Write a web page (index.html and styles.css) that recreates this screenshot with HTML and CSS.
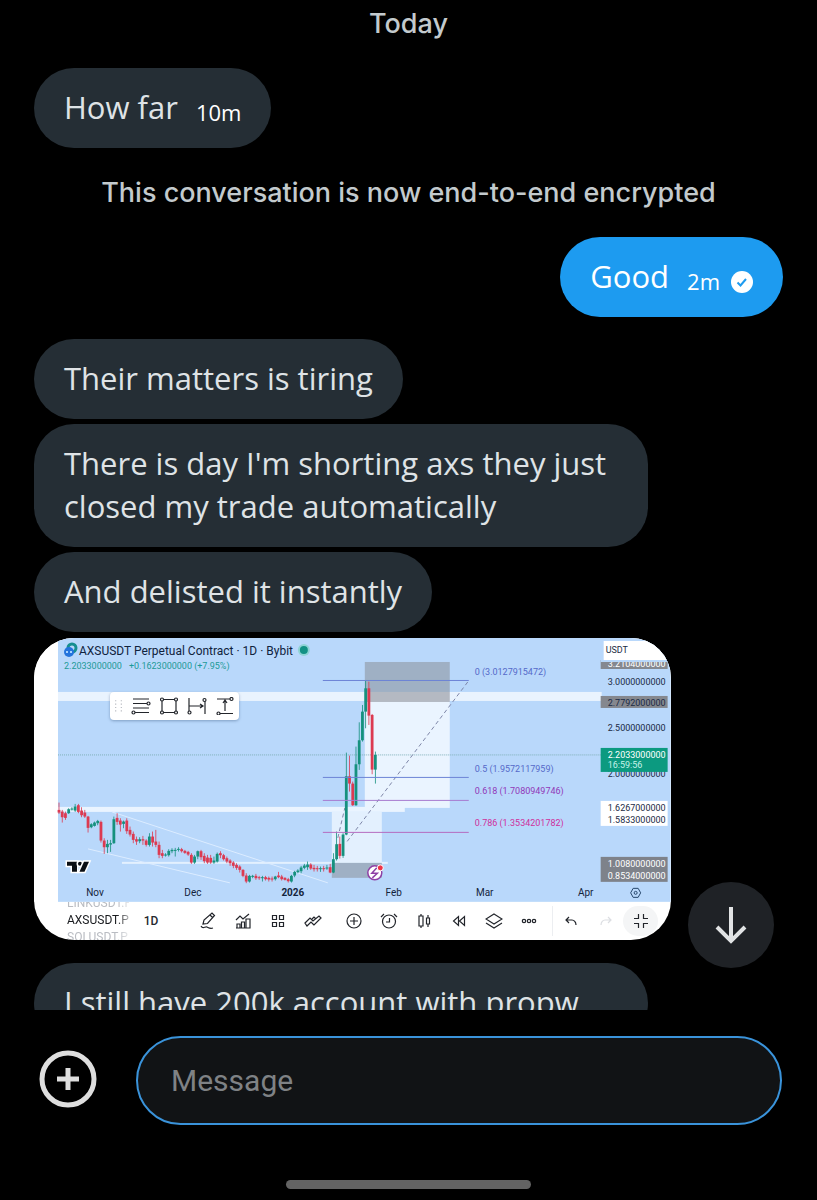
FILE: index.html
```html
<!DOCTYPE html>
<html lang="en">

<head>
    <meta charset="UTF-8">
    <meta name="viewport" content="width=device-width, initial-scale=1.0">
    <title>Messages</title>
    <link rel="stylesheet" href="styles.css">
</head>

<body>
    <main class="chat">
        <div class="messages">
            <p class="notice">Today</p>
            <div class="bubble">
                <span>How far</span>
                <time class="time">10m</time>
            </div>
            <p class="notice encrypted">This conversation is now end-to-end encrypted</p>
            <div class="bubble sent">
                <span>Good</span>
                <time class="time">2m</time>
                <svg class="check" viewBox="0 0 22 22" role="img" aria-label="Read">
                    <circle cx="11" cy="11" r="11" fill="#fff"/>
                    <path d="M6.500 11.500l3 3L15 8" fill="none" stroke="#1d9bf0" stroke-width="2"/>
                </svg>
            </div>
            <div class="group">
                <div class="bubble">Their matters is tiring</div>
                <div class="bubble">There is day I'm shorting axs they just closed my trade automatically</div>
                <div class="bubble">And delisted it instantly</div>

                <div class="photo">
                    <svg class="chart" viewBox="0 0 637 264">
                        <rect width="637" height="264" fill="#fff"/>
                        <rect x="24" width="613" height="264" fill="#b9d8fb"/>

                        <!-- zones -->
                        <rect x="24" y="54" width="544" height="9" fill="#e9f3fe"/>
                        <rect x="24" y="169" width="347" height="5" fill="#eaf4ff"/>
                        <rect x="88" y="224" width="266" height="2" fill="#e3f0fe"/>
                        <rect x="331" y="64" width="85" height="106" fill="#eaf4ff"/>
                        <rect x="331" y="24" width="85" height="30" fill="#9fb0c4"/>
                        <rect x="331" y="54" width="85" height="10" fill="#b4b9c2"/>
                        <rect x="298" y="174" width="50" height="51" fill="#e3f0fe"/>
                        <rect x="298" y="225" width="50" height="15" fill="#9fb0c4"/>
                        <path d="M78 174L294 245M54 211L196 245" stroke="#dcecff" fill="none"/>
                        <path d="M24 117H568" stroke="#7fb0b8" stroke-dasharray="1 1"/>
                        <path d="M434 44L313 204M304 200L311 170" stroke="#7d86a8" stroke-dasharray="4 3" fill="none"/>

                        <g id="candles"></g>

                        <!-- fib levels -->
                        <path d="M289 42.500H435M289 139.500H435" stroke="#6b83d6"/>
                        <path d="M289 162.500H435" stroke="#a779cf"/>
                        <path d="M289 194.500H435" stroke="#b56bc0"/>
                        <g class="label">
                            <text x="441" y="37" fill="#5569c9">0 (3.0127915472)</text>
                            <text x="441" y="134" fill="#5569c9">0.5 (1.9572117959)</text>
                            <text x="441" y="156" fill="#9137b8">0.618 (1.7080949746)</text>
                            <text x="441" y="188" fill="#cf2f9b">0.786 (1.3534201782)</text>
                        </g>

                        <!-- header -->
                        <circle cx="38" cy="10" r="4" fill="none" stroke="#168f91" stroke-width="3"/>
                        <circle cx="35" cy="14" r="5" fill="#2474dc"/>
                        <path d="M32 14h2m2 0h2" stroke="#a9d4ff" stroke-width="2"/>
                        <text class="title" x="45" y="17">AXSUSDT Perpetual Contract · 1D · Bybit</text>
                        <circle cx="270" cy="12" r="6" fill="#8fd3d4"/>
                        <circle cx="270" cy="12" r="4" fill="#129184"/>
                        <g class="change">
                            <text x="30" y="31">2.2033000000</text>
                            <text x="95" y="31">+0.1623000000 (+7.95%)</text>
                        </g>

                        <!-- price axis -->
                        <g class="label" fill="#1b2b45">
                            <rect x="567" y="22" width="67" height="9" fill="#85888f"/>
                            <text x="574" y="29" fill="#fff">3.2104000000</text>
                            <rect x="567" y="18" width="67" height="6" fill="#b9d8fb"/>
                            <rect x="570" y="3" width="67" height="19" fill="#fff"/>
                            <text x="572" y="15">USDT</text>
                            <text x="574" y="47">3.0000000000</text>
                            <rect x="567" y="58" width="67" height="12" fill="#85888f"/>
                            <text x="574" y="68">2.7792000000</text>
                            <text x="574" y="93">2.5000000000</text>
                            <text x="574" y="139">2.0000000000</text>
                            <rect x="567" y="110" width="67" height="24" fill="#0c9a80"/>
                            <text x="574" y="120" fill="#fff">2.2033000000</text>
                            <text x="574" y="130" fill="#c5f2e8">16:59:56</text>
                            <rect x="567" y="163" width="67" height="25" fill="#fff"/>
                            <text x="574" y="173">1.6267000000</text>
                            <text x="574" y="185">1.5833000000</text>
                            <rect x="567" y="219" width="67" height="25" fill="#7e828a"/>
                            <text x="574" y="229" fill="#fff">1.0080000000</text>
                            <text x="574" y="241" fill="#fff">0.8534000000</text>
                        </g>

                        <!-- time axis -->
                        <g class="month">
                            <text x="61" y="258">Nov</text>
                            <text x="159" y="258">Dec</text>
                            <text x="259" y="258" font-weight="bold">2026</text>
                            <text x="360" y="258">Feb</text>
                            <text x="451" y="258">Mar</text>
                            <text x="552" y="258">Apr</text>
                        </g>
                        <path d="M599.500 250.500h5l2.500 4.500-2.500 4.500h-5L597 255z" fill="none" stroke="#26466b"/>
                        <circle cx="602" cy="255" r="1.500" fill="none" stroke="#26466b"/>

                        <!-- logo and event marker -->
                        <g fill="#0b0f14" stroke="#fff" stroke-width="3" paint-order="stroke">
                            <path d="M33 224h10v10h-5v-6h-5z"/>
                            <circle cx="46" cy="226" r="2"/>
                            <path d="M50 224h5l-4.500 10h-5z"/>
                        </g>
                        <circle cx="341" cy="235" r="7" fill="#fff" stroke="#8e3fa5" stroke-width="1.500"/>
                        <path d="M343 230l-5 5.500h5.500l-5 4.500" fill="none" stroke="#8e3fa5" stroke-width="1.500"/>
                        <circle cx="346.500" cy="230" r="3" fill="#ee3347" stroke="#fff"/>
                    </svg>

                    <div class="palette">
                        <svg class="grip" viewBox="0 0 8 12" fill="#b3b6bd">
                            <path d="M1 1h1v1H1zM6 1h1v1H6zM1 4h1v1H1zM6 4h1v1H6zM1 7h1v1H1zM6 7h1v1H6zM1 10h1v1H1zM6 10h1v1H6z"/>
                        </svg>
                        <button class="draw" aria-label="Fib retracement">
                            <svg viewBox="0 0 20 18"><path d="M2 2h16M2 6.500h14M2 11h16M4 15.500h14"/><circle cx="17.500" cy="6.500" r="1.500"/><circle cx="2.500" cy="15.500" r="1.500"/></svg>
                        </button>
                        <button class="draw" aria-label="Rectangle">
                            <svg viewBox="0 0 20 18"><path d="M3 2.500h14v13H3z"/><circle cx="3" cy="2.500" r="1.500"/><circle cx="17" cy="2.500" r="1.500"/><circle cx="3" cy="15.500" r="1.500"/><circle cx="17" cy="15.500" r="1.500"/></svg>
                        </button>
                        <button class="draw" aria-label="Date range">
                            <svg viewBox="0 0 20 18"><path d="M2 1v13M18 4v13M2 9h13M13 7l3 2-3 2"/><circle cx="2.500" cy="15.500" r="1.500"/><circle cx="17.500" cy="3" r="1.500"/></svg>
                        </button>
                        <button class="draw" aria-label="Price range">
                            <svg viewBox="0 0 20 18"><path d="M2 2h13M5 16.500h13M10 14V4M8 6l2-3 2 3"/><circle cx="16.500" cy="2" r="1.500"/><circle cx="3.500" cy="16.500" r="1.500"/></svg>
                        </button>
                    </div>

                    <div class="toolbar">
                        <div class="symbols">
                            <span>LINKUSDT.P</span>
                            <span class="active">AXSUSDT.P</span>
                            <span>SOLUSDT.P</span>
                        </div>
                        <button class="interval">1D</button>
                        <div class="tools">
                            <button class="tool" aria-label="Draw">
                                <svg viewBox="0 0 18 18"><path d="M4 12l1-4 8-7 2.500 2.500-7 8zM11 3l2.500 2.500M2 14c2 4 4 0 6 1s3 2 6 1"/></svg>
                            </button>
                            <button class="tool" aria-label="Indicators">
                                <svg viewBox="0 0 18 18"><path d="M2 8l4-4 3 3 6-5M3 16v-4h3v4zM7.500 16v-6h3v6zM12 16V7h4v9zM2 16h14"/></svg>
                            </button>
                            <button class="tool" aria-label="Layouts">
                                <svg viewBox="0 0 18 18"><path d="M3.500 3.500h4v4h-4zM10.500 3.500h4v4h-4zM3.500 10.500h4v4h-4zM10.500 10.500h4v4h-4z"/></svg>
                            </button>
                            <button class="tool" aria-label="Compare">
                                <svg viewBox="0 0 18 18"><path d="M1 11l5-5 3 3 6-5 2 2-7 7-3-3-4 4zM3 14l4-4 3 3M8 7l2-2 2 2"/></svg>
                            </button>
                        </div>
                        <div class="tools">
                            <button class="tool" aria-label="Add">
                                <svg viewBox="0 0 18 18"><circle cx="9" cy="9" r="7"/><path d="M9 5v8M5 9h8"/></svg>
                            </button>
                            <button class="tool" aria-label="Alert">
                                <svg viewBox="0 0 18 18"><circle cx="9" cy="9.500" r="6.500"/><path d="M9.500 6v4H6M1 5l3-3M17 5l-3-3"/></svg>
                            </button>
                            <button class="tool" aria-label="Chart type">
                                <svg viewBox="0 0 18 18"><path d="M4 4h4v10H4zM6 2v2M6 14v2M11.500 6h3v6h-3zM13 3v3M13 12v3"/></svg>
                            </button>
                            <button class="tool" aria-label="Replay">
                                <svg viewBox="0 0 18 18"><path d="M8.500 4.500v9L3.500 9zM14.500 4.500v9L9.500 9z"/></svg>
                            </button>
                            <button class="tool" aria-label="Objects">
                                <svg viewBox="0 0 18 18"><path d="M9 2l8 5-8 5-8-5zM1 11l8 5 8-5"/></svg>
                            </button>
                            <button class="tool" aria-label="More">
                                <svg viewBox="0 0 18 18"><circle cx="4" cy="9" r="1.700"/><circle cx="9" cy="9" r="1.700"/><circle cx="14" cy="9" r="1.700"/></svg>
                            </button>
                        </div>
                        <div class="tools last">
                            <button class="tool" aria-label="Undo">
                                <svg viewBox="0 0 18 18"><path d="M7 5L4 8l3 3M4 8h6c2 0 4 2 4 5"/></svg>
                            </button>
                            <button class="tool" aria-label="Redo" disabled>
                                <svg viewBox="0 0 18 18"><path d="M11 5l3 3-3 3M14 8H8c-2 0-4 2-4 5"/></svg>
                            </button>
                            <button class="tool shrink" aria-label="Exit full screen">
                                <svg viewBox="0 0 18 18"><path d="M2 6.500h4.500V2M16 6.500h-4.500V2M2 11.500h4.500V16M16 11.500h-4.500V16"/></svg>
                            </button>
                        </div>
                    </div>
                </div>
            </div>
            <div class="bubble full">I still have 200k account with propw</div>
        </div>

        <button class="scroll-down" aria-label="Scroll to latest">
            <svg viewBox="0 0 40 40"><path d="M20 2v34M6 22l14 14 14-14"/></svg>
        </button>
    </main>

    <form class="composer">
        <button class="add" type="button" aria-label="Add attachment">
            <svg viewBox="0 0 58 58"><circle cx="29" cy="29" r="26"/><path d="M29 18v22M18 29h22"/></svg>
        </button>
        <input class="field" type="text" placeholder="Message" aria-label="Message">
    </form>
    <div class="home-bar"></div>

    <script src="chart.js"></script>
</body>

</html>
```
FILE: styles.css
```css
* {
    box-sizing: border-box;
}

body {
    margin: 0;
    height: 100vh;
    display: flex;
    flex-direction: column;
    background-color: #000;
    color: #dfe3e6;
    font-family: "Open Sans", Roboto, sans-serif;
}

button {
    padding: 0;
    border: none;
    background: none;
    font-family: inherit;
    cursor: pointer;
}

svg {
    display: block;
}

.chat {
    position: relative;
    flex: 1;
    min-height: 0;
    overflow: hidden;
}

.messages {
    display: flex;
    flex-direction: column;
    align-items: flex-start;
    padding: 8px 34px 0;
}

.notice {
    align-self: center;
    margin: 0 0 28px;
    font-family: Inter, Roboto, sans-serif;
    font-size: 27px;
    font-weight: 500;
    line-height: 32px;
    color: #c3cacd;
}

.encrypted {
    margin: 29px 0 28px;
}

.bubble {
    display: flex;
    align-items: flex-end;
    max-width: 82%;
    padding: 18px 30px 19px;
    border-radius: 40px;
    background-color: #252e35;
    font-size: 31px;
    line-height: 43px;
}

.sent {
    align-self: flex-end;
    margin-bottom: 22px;
    background-color: #1d9bf0;
    color: #fff;
}

.full {
    width: 82%;
    margin-top: 23px;
}

.time {
    margin-left: 18px;
    font-size: 22px;
    line-height: 34px;
    color: #fff;
}

.check {
    width: 22px;
    height: 22px;
    margin: 0 0 5px 11px;
}

.group {
    display: flex;
    flex-direction: column;
    align-items: flex-start;
    gap: 5px;
    width: 100%;
}

/* shared chart */
.photo {
    position: relative;
    width: 85%;
    margin-top: 1px;
    border-radius: 40px;
    overflow: hidden;
    background-color: #fff;
    font-family: Roboto, sans-serif;
}

.chart {
    width: 100%;
}

.label {
    font-size: 9px;
}

.change {
    font-size: 9px;
    fill: #1c9a97;
}

.title {
    font-size: 12px;
    fill: #10233d;
}

.month {
    font-size: 10px;
    text-anchor: middle;
    fill: #14243c;
}

.up {
    fill: #16917e;
}

.down {
    fill: #dc3a51;
}

.palette {
    position: absolute;
    top: 54px;
    left: 76px;
    display: flex;
    align-items: center;
    height: 28px;
    padding-left: 4px;
    border-radius: 4px;
    background-color: #fff;
    box-shadow: 0 1px 3px rgba(40, 70, 110, 0.4);
}

.grip {
    width: 9px;
    margin-right: 4px;
}

.draw {
    width: 28px;
    padding: 0 4px;
}

.draw svg,
.tool svg {
    width: 100%;
    fill: none;
    stroke: #22252b;
    stroke-width: 1.2;
}

.draw circle {
    fill: #fff;
}

.toolbar {
    display: flex;
    align-items: center;
    height: 38px;
    padding-left: 33px;
}

.symbols {
    display: flex;
    flex-direction: column;
    justify-content: center;
    width: 62px;
    height: 38px;
    overflow: hidden;
    color: #b9bcc2;
    font-size: 12px;
    line-height: 17px;
    -webkit-mask-image: linear-gradient(to right, #000 80%, transparent 110%);
    mask-image: linear-gradient(to right, #000 80%, transparent 110%);
}

.active {
    color: #17191d;
}

.interval {
    width: 44px;
    margin-right: 17px;
    font-size: 12px;
    font-weight: 500;
    color: #25282e;
}

.tools {
    display: flex;
    align-items: center;
    margin-right: 6px;
}

.tool {
    display: flex;
    justify-content: center;
    width: 35px;
}

.tool svg {
    width: 18px;
    height: 18px;
}

.tool:disabled svg {
    stroke: #dcdee2;
}

.last {
    margin-right: 0;
    border-left: 1px solid #eceef1;
}

.shrink {
    height: 30px;
    align-items: center;
    border-radius: 15px;
    background-color: #f4f5f6;
}

.scroll-down {
    position: absolute;
    right: 43px;
    bottom: 42px;
    display: flex;
    align-items: center;
    justify-content: center;
    width: 86px;
    height: 86px;
    border-radius: 50%;
    background-color: #1f2226;
}

.scroll-down svg {
    width: 40px;
    fill: none;
    stroke: #e1e3e4;
    stroke-width: 4;
}

.composer {
    display: flex;
    align-items: center;
    gap: 39px;
    padding: 26px 35px 55px 39px;
}

.add {
    margin-bottom: 4px;
}

.add svg {
    width: 58px;
    fill: none;
    stroke: #dedede;
    stroke-width: 5;
}

.field {
    flex: 1;
    min-width: 0;
    height: 89px;
    padding: 0 33px;
    border: 2px solid #3a93da;
    border-radius: 45px;
    outline: none;
    background-color: #111315;
    color: #e1e5e8;
    font-family: Roboto, sans-serif;
    font-size: 30px;
}

.field::placeholder {
    color: #7f8285;
}

.home-bar {
    align-self: center;
    width: 30%;
    height: 9px;
    margin-bottom: 11px;
    border-radius: 5px;
    background-color: #636363;
}
```
FILE: chart.js
```js
// high, body top, body bottom, low, 1 = up / 0 = down
const candles = [
    [38, 60, 68, 72, 0], [60, 65, 82, 98, 0], [65, 70, 84, 90, 0], [55, 58, 70, 72, 1],
    [52, 56, 59, 62, 1], [42, 50, 62, 66, 1], [42, 46, 66, 70, 0], [52, 62, 76, 82, 0],
    [60, 68, 80, 84, 0], [78, 80, 114, 128, 0], [100, 103, 112, 115, 1], [95, 98, 108, 110, 1],
    [90, 93, 100, 106, 1], [92, 96, 152, 158, 0], [145, 152, 172, 192, 0], [150, 162, 172, 190, 1],
    [150, 160, 164, 186, 1], [80, 88, 160, 162, 1], [70, 84, 96, 105, 0], [85, 92, 104, 125, 0],
    [92, 95, 102, 115, 1], [85, 92, 124, 132, 0], [110, 120, 134, 140, 0], [125, 132, 150, 160, 0],
    [140, 148, 155, 165, 0], [142, 148, 154, 160, 1], [138, 148, 152, 165, 0], [148, 152, 165, 170, 0],
    [130, 140, 165, 170, 1], [125, 140, 158, 170, 0], [120, 155, 165, 172, 0], [155, 165, 195, 205, 0],
    [180, 190, 198, 205, 0], [190, 194, 197, 200, 1], [178, 183, 196, 200, 1], [175, 180, 184, 190, 1],
    [174, 180, 183, 200, 1], [172, 177, 180, 185, 1], [174, 178, 184, 188, 0], [180, 183, 189, 192, 0],
    [183, 186, 194, 198, 0], [190, 195, 218, 222, 0], [195, 200, 218, 222, 1], [182, 184, 200, 208, 1],
    [180, 184, 202, 210, 0], [190, 198, 214, 220, 0], [195, 203, 218, 222, 0], [195, 204, 218, 222, 0],
    [200, 212, 218, 222, 1], [188, 192, 215, 218, 1], [184, 190, 196, 205, 0], [192, 196, 208, 212, 0],
    [200, 205, 215, 220, 0], [208, 212, 220, 228, 0], [214, 218, 228, 235, 0], [220, 225, 234, 240, 0],
    [226, 230, 240, 248, 0], [238, 240, 258, 262, 0], [250, 257, 275, 280, 0], [255, 258, 275, 278, 1],
    [255, 258, 261, 265, 1], [252, 258, 265, 270, 0], [258, 262, 265, 270, 0], [258, 262, 265, 275, 1],
    [258, 262, 268, 272, 0], [260, 264, 269, 275, 0], [260, 266, 269, 275, 0], [258, 260, 268, 272, 1],
    [246, 257, 262, 265, 0], [255, 260, 268, 272, 0], [262, 264, 270, 272, 0], [264, 268, 274, 278, 0],
    [255, 258, 275, 278, 1], [243, 246, 257, 262, 1], [238, 242, 247, 250, 1], [228, 233, 244, 250, 1],
    [222, 227, 234, 238, 1], [215, 224, 232, 240, 1], [220, 224, 236, 240, 0], [225, 234, 238, 245, 0],
    [228, 235, 238, 245, 0], [230, 235, 238, 246, 1], [228, 235, 238, 245, 0], [225, 233, 236, 240, 1],
    [222, 232, 248, 250, 0], [190, 208, 248, 250, 1], [125, 163, 208, 212, 1], [140, 162, 198, 206, 0],
    [130, 134, 198, 204, 1], [-112, -41, 134, 136, 1], [-103, -41, -19, 5, 0], [-25, -19, 46, 48, 0],
    [-130, -77, 46, 48, 1], [-203, -149, -77, -60, 1], [-255, -235, -149, -145, 1], [-327, -305, -235, -185, 1],
    [-325, -305, -223, -195, 0], [-228, -225, -61, -47, 0], [-115, -105, -61, -19, 1]
];

const group = document.getElementById('candles');

const addRect = (x, top, bottom, width, name) => {
    const rect = document.createElementNS('http://www.w3.org/2000/svg', 'rect');
    rect.setAttribute('x', x - width / 2);
    rect.setAttribute('y', top / 3 + 152);
    rect.setAttribute('width', width);
    rect.setAttribute('height', (bottom - top) / 3);
    rect.setAttribute('class', name);
    group.appendChild(rect);
};

candles.forEach(([high, top, bottom, low, up], i) => {
    const x = 25 + i * 3.23;
    const name = up ? 'up' : 'down';
    addRect(x, high, low, 0.8, name);
    addRect(x, top, bottom, 2.8, name);
});
```
